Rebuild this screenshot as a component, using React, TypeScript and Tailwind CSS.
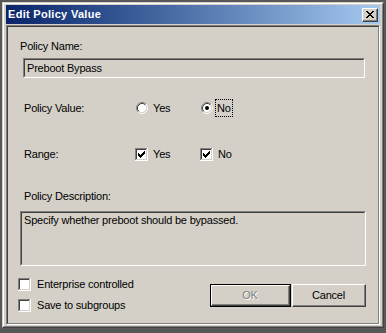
import React from "react";

function Radio({ checked }: { checked?: boolean }) {
  return (
    <svg width="12" height="12" viewBox="0 0 12 12" className="shrink-0">
      <circle cx="6" cy="6" r="4.5" fill="#fff" />
      <path d="M2.11 9.89 A5.5 5.5 0 0 1 9.89 2.11" fill="none" stroke="#808080" strokeWidth="1" />
      <path d="M9.89 2.11 A5.5 5.5 0 0 1 2.11 9.89" fill="none" stroke="#ffffff" strokeWidth="1" />
      <path d="M2.82 9.18 A4.5 4.5 0 0 1 9.18 2.82" fill="none" stroke="#404040" strokeWidth="1" />
      <path d="M9.18 2.82 A4.5 4.5 0 0 1 2.82 9.18" fill="none" stroke="#d4d0c8" strokeWidth="1" />
      {checked && <circle cx="6" cy="6" r="2" fill="#000" />}
    </svg>
  );
}

function Check({ checked }: { checked?: boolean }) {
  const cols = [2, 3, 4, 3, 2, 1, 0];
  return (
    <svg width="13" height="13" viewBox="0 0 13 13" shapeRendering="crispEdges" className="shrink-0">
      <rect x="0" y="0" width="13" height="13" fill="#ffffff" />
      <rect x="0" y="0" width="12" height="1" fill="#808080" />
      <rect x="0" y="0" width="1" height="12" fill="#808080" />
      <rect x="1" y="1" width="10" height="1" fill="#404040" />
      <rect x="1" y="1" width="1" height="10" fill="#404040" />
      <rect x="1" y="11" width="11" height="1" fill="#d4d0c8" />
      <rect x="11" y="1" width="1" height="11" fill="#d4d0c8" />
      {checked &&
        cols.map((r, c) => (
          <rect key={c} x={3 + c} y={3 + r} width="1" height="3" fill="#000" />
        ))}
    </svg>
  );
}

function CloseGlyph() {
  const rows: [number, number][][] = [
    [[0, 2], [6, 2]],
    [[1, 2], [5, 2]],
    [[2, 4]],
    [[3, 2]],
    [[2, 4]],
    [[1, 2], [5, 2]],
    [[0, 2], [6, 2]],
  ];
  return (
    <svg width="8" height="7" viewBox="0 0 8 7" shapeRendering="crispEdges">
      {rows.map((segs, y) =>
        segs.map(([x, w], i) => <rect key={`${y}-${i}`} x={x} y={y} width={w} height="1" fill="#000" />)
      )}
    </svg>
  );
}

function Sunken({ className, children }: { className?: string; children?: React.ReactNode }) {
  return (
    <div className={`border border-t-[#808080] border-l-[#808080] border-b-white border-r-white ${className ?? ""}`}>
      <div className="h-full border border-t-[#404040] border-l-[#404040] border-b-[#d4d0c8] border-r-[#d4d0c8] bg-[#d4d0c8]">
        {children}
      </div>
    </div>
  );
}

export default function App() {
  return (
    <div className="w-[386px] h-[333px] bg-[#585858] p-[2px] pb-[5px] font-['Liberation_Sans',Arial,sans-serif] text-[11px] leading-[13px] tracking-[-0.2px] text-black select-none">
      <div className="h-full border border-t-[#d4d0c8] border-l-[#d4d0c8] border-r-[#404040] border-b-[#404040]">
        <div className="h-full flex flex-col border border-t-white border-l-white border-r-[#808080] border-b-[#808080] bg-[#d4d0c8] px-[2px] pt-[1px] pb-[1px]">
          {/* Title bar */}
          <div className="h-[19px] shrink-0 flex items-center bg-linear-to-r from-[#0a246a] to-[#a6caf0] pl-[2px] pr-[2px]">
            <span className="text-white font-bold text-[11px] leading-[13px] tracking-[0.3px]">Edit Policy Value</span>
            <div className="ml-auto w-[16px] h-[14px] border border-t-white border-l-white border-r-[#404040] border-b-[#404040] bg-[#d4d0c8]">
              <div className="w-full h-full border-r border-b border-r-[#808080] border-b-[#808080] flex items-center justify-center">
                <CloseGlyph />
              </div>
            </div>
          </div>

          {/* Client area */}
          <div className="mt-[1px] flex-1 border border-t-[#808080] border-l-[#808080] border-b-white border-r-white">
            <div className="h-full border border-t-[#404040] border-l-[#404040] border-b-[#808080] border-r-[#808080] flex flex-col">
              <div className="mt-[13px] ml-[12px] h-[13px]">Policy Name:</div>

              <Sunken className="mt-[5px] ml-[15px] w-[342px] h-[20px]">
                <div className="pl-[2px] pt-[2px]">Preboot Bypass</div>
              </Sunken>

              <div className="mt-[21px] h-[18px] flex items-center">
                <div className="ml-[16px] w-[112px]">Policy Value:</div>
                <Radio />
                <div className="ml-[5px] w-[48px]">Yes</div>
                <Radio checked />
                <div className="ml-[2px] h-[18px] flex items-center px-[1px] border border-dotted border-black">No</div>
              </div>

              <div className="mt-[30px] h-[14px] flex items-center">
                <div className="ml-[16px] w-[111px]">Range:</div>
                <Check checked />
                <div className="ml-[5px] w-[47px]">Yes</div>
                <Check checked />
                <div className="ml-[5px]">No</div>
              </div>

              <div className="mt-[29px] ml-[16px] h-[13px]">Policy Description:</div>

              <Sunken className="mt-[8px] ml-[12px] w-[346px] h-[55px]">
                <div className="pl-[2px] pt-[1px]">Specify whether preboot should be bypassed.</div>
              </Sunken>

              <div className="mt-[12px] flex">
                <div className="ml-[10px] w-[192px] flex flex-col">
                  <div className="h-[13px] flex items-center">
                    <Check />
                    <span className="ml-[6px]">Enterprise controlled</span>
                  </div>
                  <div className="mt-[8px] h-[13px] flex items-center">
                    <Check />
                    <span className="ml-[6px]">Save to subgroups</span>
                  </div>
                </div>
                <div className="mt-[6px] flex">
                  <div className="w-[81px] h-[23px] border border-black">
                    <div className="h-full border border-t-white border-l-white border-r-[#404040] border-b-[#404040]">
                      <div className="h-full border-r border-b border-r-[#808080] border-b-[#808080] flex items-center justify-center text-[#808080] [text-shadow:1px_1px_0_#fff]">
                        OK
                      </div>
                    </div>
                  </div>
                  <div className="ml-[1px] w-[74px] h-[23px] border border-t-white border-l-white border-r-[#404040] border-b-[#404040]">
                    <div className="h-full border-r border-b border-r-[#808080] border-b-[#808080] flex items-center justify-center">
                      Cancel
                    </div>
                  </div>
                </div>
              </div>
            </div>
          </div>
        </div>
      </div>
    </div>
  );
}
